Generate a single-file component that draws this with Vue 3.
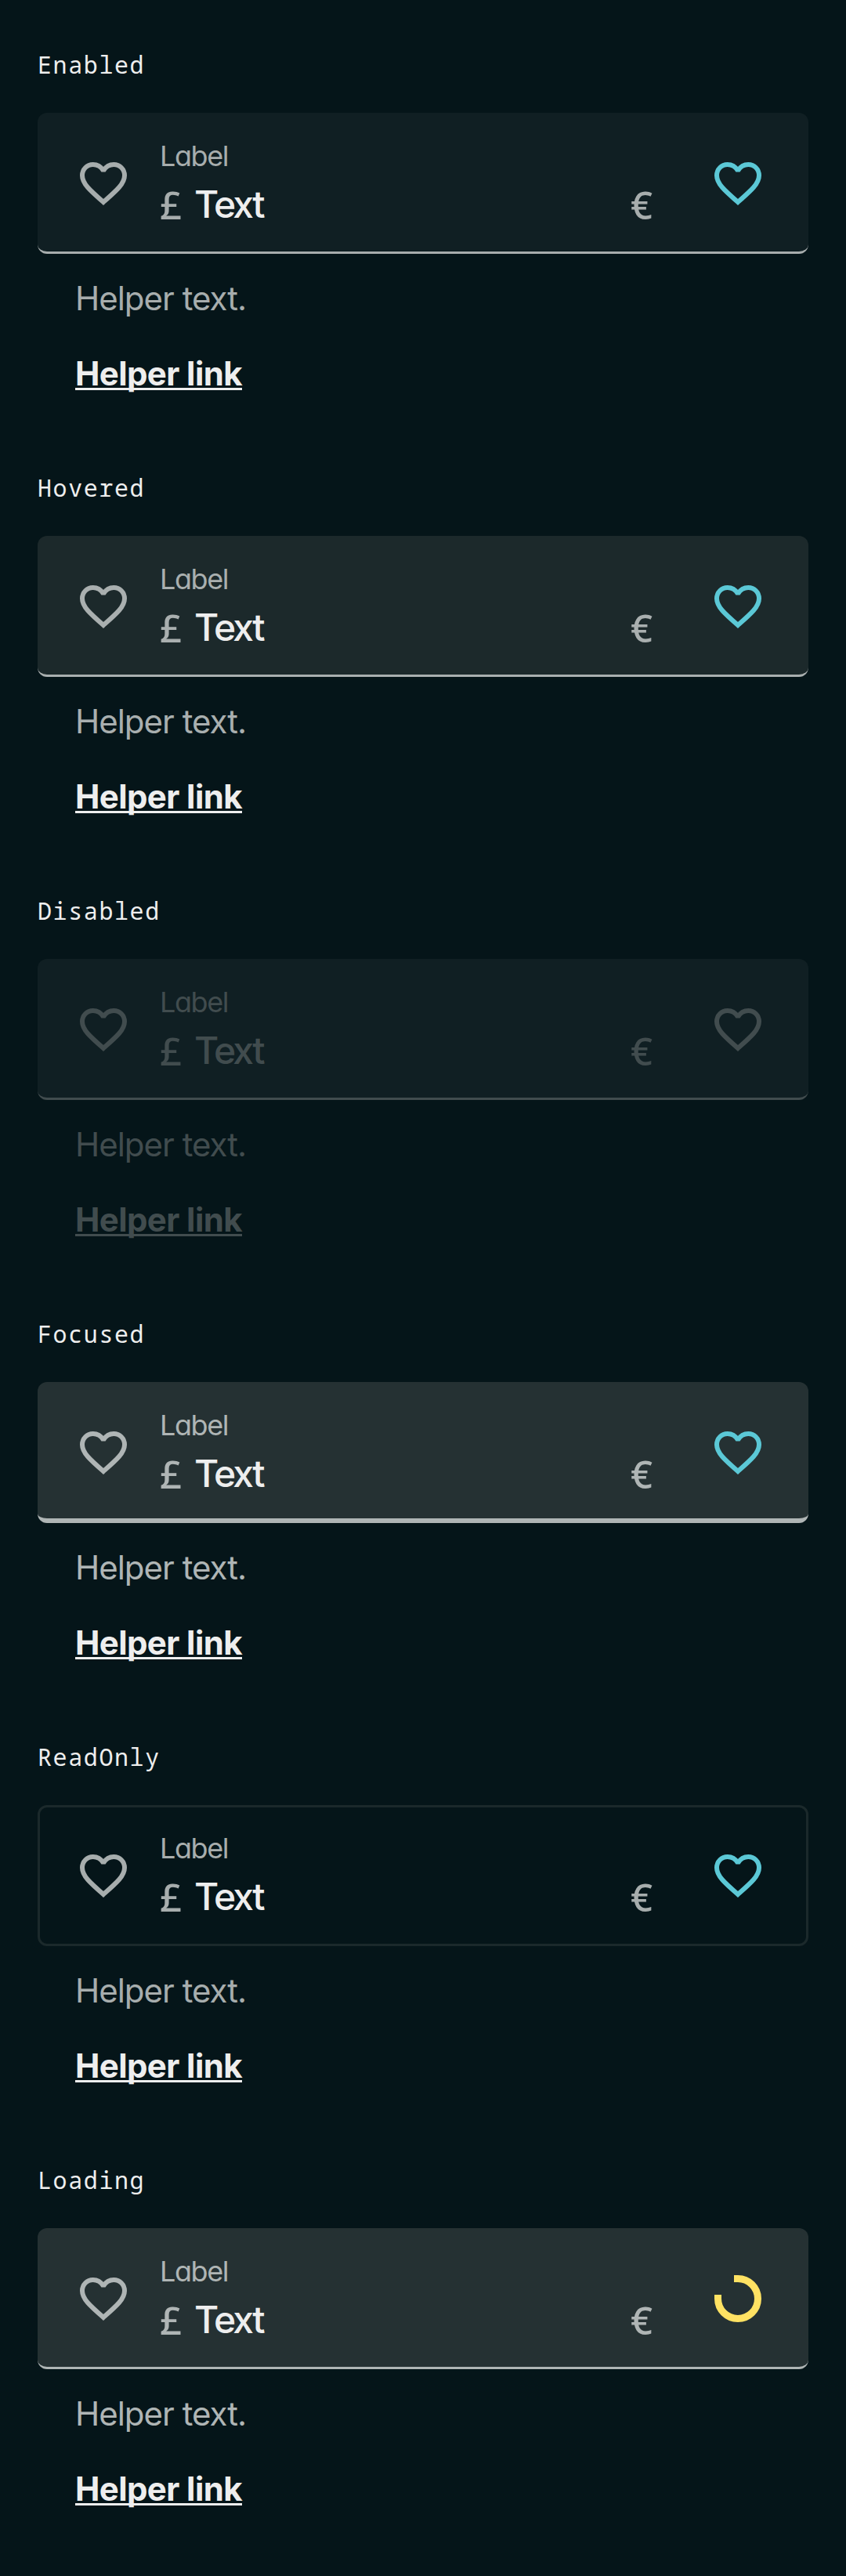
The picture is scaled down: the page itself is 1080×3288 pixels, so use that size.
<script setup>
const fields = ['Enabled', 'Hovered', 'Disabled', 'Focused', 'ReadOnly', 'Loading']
const heart = 'M12 6.6C11 5 9.5 4 7.6 4C5 4 3 6 3 8.67C3 12.2 6.5 15.2 12 20C17.5 15.2 21 12.2 21 8.67C21 6 19 4 16.4 4C14.5 4 13 5 12 6.6Z'
</script>

<template>
  <main class="page">
    <section v-for="name in fields" :key="name" class="sample" :class="name.toLowerCase()">
      <h2 class="title">{{ name }}</h2>
      <div class="field">
        <svg class="icon" viewBox="0 0 24 24"><path :d="heart" /></svg>
        <div class="content">
          <span class="label">Label</span>
          <div class="value-row">
            <span class="affix prefix">£</span>
            <span class="value">Text</span>
            <span class="affix suffix">€</span>
          </div>
        </div>
        <svg v-if="name === 'Loading'" class="icon spinner" viewBox="0 0 72 72">
          <path d="M31 10.5H36A25.5 25.5 0 1 1 10.5 36V31" />
        </svg>
        <svg v-else class="icon trailing" viewBox="0 0 24 24"><path :d="heart" /></svg>
      </div>
      <p class="helper"><span>Helper text.</span></p>
      <p class="link"><span>Helper link</span></p>
    </section>
  </main>
</template>

<style>
body { background: #051519; }
</style>

<style scoped>
.page {
  width: 1080px;
  height: 3288px;
  box-sizing: border-box;
  padding: 48px 48px 0;
  background: #051519;
  font-family: Inter, "Liberation Sans", sans-serif;
  font-feature-settings: "cv11" 1;
  color: #eee;
  --muted: #a7adad;
}
.sample { height: 540px; }
.title {
  margin: 0;
  height: 96px;
  padding-top: 15px;
  box-sizing: border-box;
  font: 400 30px/40px "Droid Sans Mono", "Noto Sans Mono", "DejaVu Sans Mono", monospace;
  letter-spacing: 1.6px;
}
.field {
  display: flex;
  align-items: center;
  box-sizing: border-box;
  height: 180px;
  padding: 0 54px 0 48px;
  border-radius: 12px;
  background: #101f23;
  border-bottom: 3px solid var(--muted);
}
.icon {
  width: 72px;
  height: 72px;
  flex: none;
  fill: none;
  stroke: var(--muted);
  stroke-width: 2;
  stroke-miterlimit: 1.6;
  position: relative;
  top: 1.5px;
}
.trailing { stroke: #5bc8d6; }
.spinner { stroke: #ffe263; stroke-width: 9; }
.content { flex: 1; align-self: stretch; display: flex; flex-direction: column; padding: 30px 73px 0 36px; }
.label { font-size: 36px; line-height: 50px; color: var(--muted); letter-spacing: -1.4px; }
.value-row { display: flex; font-size: 48px; line-height: 60px; padding-top: 7px; font-weight: 500; }
.value { letter-spacing: -2.7px; }
.affix { color: var(--muted); font-family: "Noto Sans", sans-serif; font-size: 49px; }
.prefix { width: 44px; }
.suffix { margin-left: auto; }
.helper, .link { margin: 0; padding-left: 48px; font-size: 42px; line-height: 60px; }
.helper { color: var(--muted); margin-top: 27px; letter-spacing: -1px; }
.link { font-weight: 700; margin-top: 36px; letter-spacing: -0.6px; }
.link span {
  text-decoration: underline;
  text-decoration-thickness: 3px;
  text-underline-offset: 3px;
  text-decoration-skip-ink: none;
}

.hovered { --muted: #a9afaf; }
.hovered .field { background: #1c292b; }
.focused, .loading { --muted: #afb5b5; }
.focused .field, .loading .field { background: #253133; }
.focused .field { border-bottom-width: 6px; }
.focused .icon { top: 3px; }
.readonly .field { background: none; border: 3px solid #1b292b; padding: 0 51px 0 45px; }
.readonly .icon { top: 0; }
.readonly .content { padding-top: 27px; padding-right: 73px; }
.disabled { --muted: #414c4e; }
.disabled .trailing { stroke: var(--muted); }
.disabled .value, .disabled .link { color: var(--muted); }
</style>
